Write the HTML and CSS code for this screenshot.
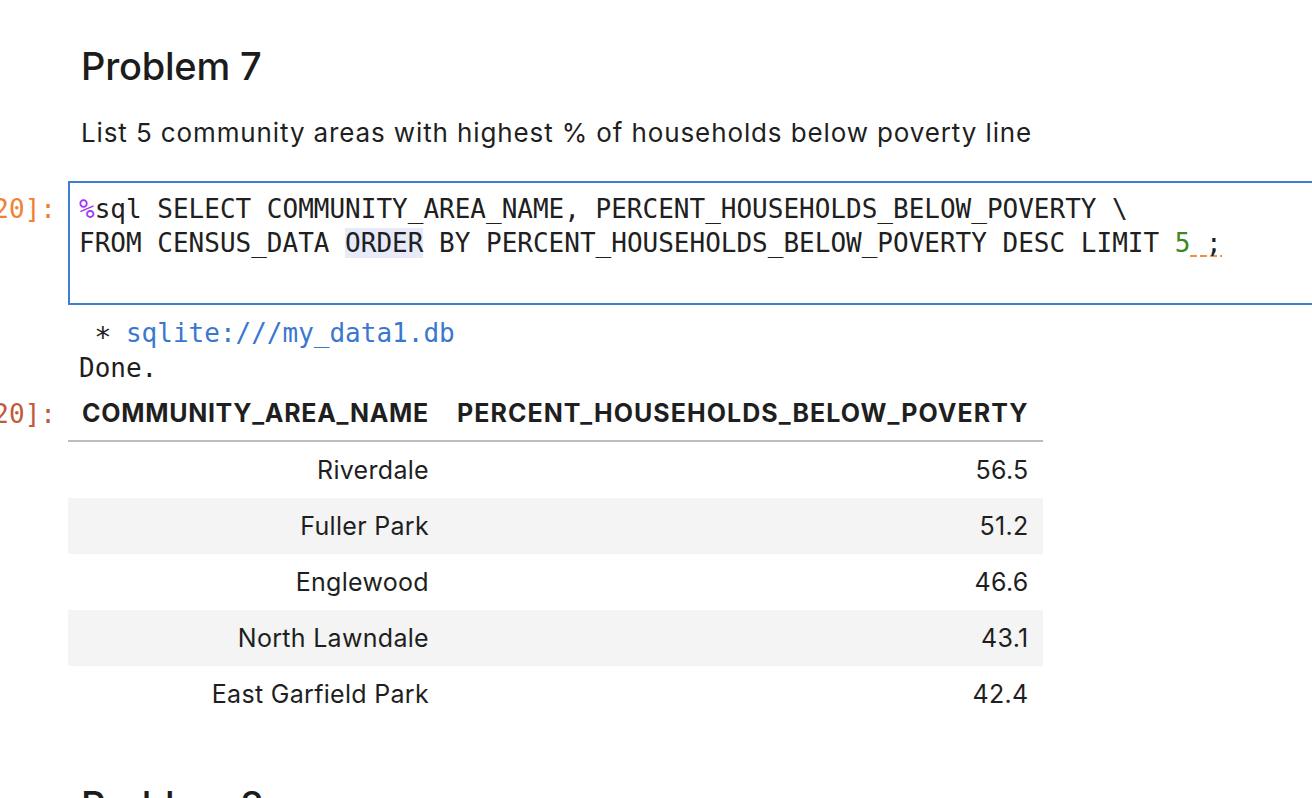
FILE: index.html
```html
<!DOCTYPE html>
<html>
<head>
<meta charset="utf-8">
<link rel="stylesheet" href="styles.css">
</head>
<body>
<div class="notebook">
  <div class="cell markdown">
    <div class="prompt"></div>
    <div class="md-body">
      <h2 class="md-h2">Problem 7</h2>
      <p class="md-p">List 5 community areas with highest % of households below poverty line</p>
    </div>
  </div>

  <div class="cell code">
    <div class="prompt in-prompt"><span>[20]:</span></div>
    <div class="editor">
      <div class="cm-line"><span class="cm-magic">%</span>sql SELECT COMMUNITY_AREA_NAME, PERCENT_HOUSEHOLDS_BELOW_POVERTY \</div>
      <div class="cm-line">FROM CENSUS_DATA <span class="cm-match">ORDER</span> BY PERCENT_HOUSEHOLDS_BELOW_POVERTY DESC LIMIT <span class="cm-number">5</span><span class="cm-lint"> ;</span></div>
      <div class="cm-line"> </div>
    </div>
  </div>

  <div class="cell output">
    <div class="prompt"></div>
    <pre class="stdout"> <span class="star">*</span> <span class="ansi-blue">sqlite:///my_data1.db</span>
Done.</pre>
  </div>

  <div class="cell output table-out">
    <div class="prompt out-prompt"><span>[20]:</span></div>
    <table class="df">
      <thead>
        <tr><th>COMMUNITY_AREA_NAME</th><th class="wide">PERCENT_HOUSEHOLDS_BELOW_POVERTY</th></tr>
      </thead>
      <tbody>
        <tr><td>Riverdale</td><td>56.5</td></tr>
        <tr><td>Fuller Park</td><td>51.2</td></tr>
        <tr><td>Englewood</td><td>46.6</td></tr>
        <tr><td>North Lawndale</td><td>43.1</td></tr>
        <tr><td>East Garfield Park</td><td>42.4</td></tr>
      </tbody>
    </table>
  </div>

  <div class="cell markdown next">
    <div class="prompt"></div>
    <div class="md-body">
      <h2 class="md-h2">Problem 8</h2>
    </div>
  </div>
</div>
</body>
</html>
```

FILE: styles.css
```css
html, body {
  margin: 0;
  padding: 0;
  background: #ffffff;
  overflow: hidden;
}
body {
  width: 1312px;
  height: 798px;
  font-family: Inter, "Noto Sans", sans-serif;
  color: #1f1f1f;
}
.notebook {
  display: flex;
  flex-direction: column;
  padding-top: 42px;
}
.cell {
  display: flex;
  flex-direction: row;
  align-items: flex-start;
}
.prompt {
  flex: 0 0 56px;
  width: 56px;
  margin-right: 12px;
  display: flex;
  justify-content: flex-end;
  font-family: "DejaVu Sans Mono", monospace;
  font-size: 26px;
  line-height: 34px;
  white-space: nowrap;
}
.in-prompt {
  color: #ef8230;
  padding-top: 11px;
}
.out-prompt {
  color: #c2593b;
  padding-top: 11px;
}
.md-body {
  padding-left: 13px;
}
.md-h2 {
  margin: 0;
  font-size: 38px;
  font-weight: 500;
  line-height: 48px;
  letter-spacing: -0.2px;
  color: #1c1c1c;
}
.md-p {
  margin: 25px 0 0 0;
  font-size: 26px;
  line-height: 36px;
  letter-spacing: 0.88px;
  color: #1f1f1f;
}
.code {
  margin-top: 30px;
}
.editor {
  flex: 1 1 auto;
  margin-right: -40px;
  border: 2px solid #3f7fd3;
  padding: 9px 9px;
  font-family: "DejaVu Sans Mono", monospace;
  font-size: 26px;
  line-height: 34px;
  color: #202020;
}
.cm-line {
  height: 34px;
  white-space: pre;
}
.cm-magic { color: #a437f5; }
.cm-number { color: #3b8a20; }
.cm-match { background: #e6eaf9; }
.cm-lint {
  background-image: repeating-linear-gradient(to right, #f0914a 0 7px, transparent 7px 10px);
  background-size: 100% 2px;
  background-repeat: no-repeat;
  background-position: 0 27px;
}
.output {
  margin-top: 11px;
}
.stdout {
  margin: 0;
  padding-left: 11px;
  font-family: "DejaVu Sans Mono", monospace;
  font-size: 26px;
  line-height: 35px;
  color: #1e1e1e;
}
.star {
  display: inline-block;
  transform: translateY(4px) scale(1.1);
}
.table-out {
  margin-top: 0;
}
.ansi-blue { color: #3a77d0; }
.df {
  border-collapse: collapse;
  font-family: Inter, "Noto Sans", sans-serif;
  font-size: 25px;
  color: #1f1f1f;
}
.df th {
  font-weight: 700;
  text-align: right;
  padding: 0 14px;
  height: 54px;
  border-bottom: 2px solid #bdbdbd;
  vertical-align: middle;
  letter-spacing: 0.7px;
}
.df th.wide {
  letter-spacing: 1.05px;
}
.df td {
  text-align: right;
  padding: 0 14px;
  height: 56px;
  vertical-align: middle;
  letter-spacing: 0.3px;
}
.df tbody tr:nth-child(even) {
  background: #f4f4f4;
}
.next {
  margin-top: 59px;
}
```
